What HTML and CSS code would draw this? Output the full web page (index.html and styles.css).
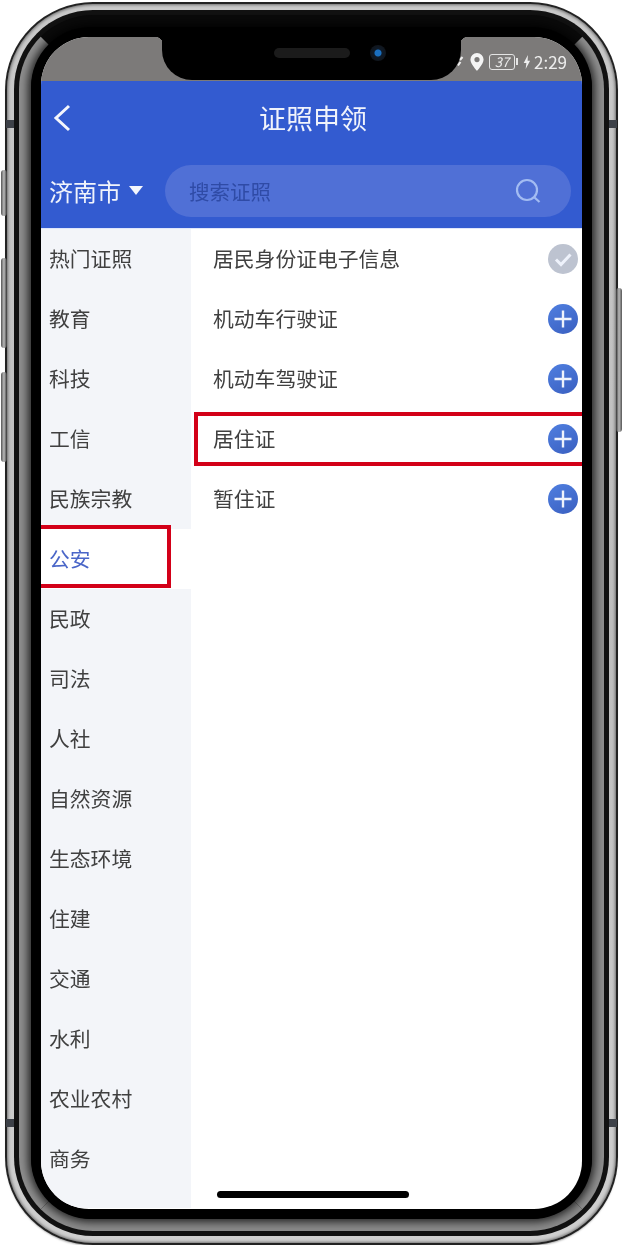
FILE: index.html
```html
<!DOCTYPE html>
<html lang="zh-CN">
<head>
  <meta charset="UTF-8" />
  <title>证照申领</title>
  <link rel="stylesheet" href="styles.css">
</head>
<body>

<div class="phone">
  <span class="side-btn btn-mute"></span>
  <span class="side-btn btn-up"></span>
  <span class="side-btn btn-down"></span>
  <span class="side-btn btn-power"></span>

  <div class="rim">
    <span class="antenna ant-tl"></span>
    <span class="antenna ant-tr"></span>
    <span class="antenna ant-bl"></span>
    <span class="antenna ant-br"></span>

    <div class="ring">
      <div class="band">
        <div class="bezel">
          <div class="screen">

            <div class="statusbar">
              <svg class="st-link" viewBox="0 0 8 12"><path d="M6.500 1 4 4M4.500 6 2 9.500"/></svg>
              <svg class="st-pin" viewBox="0 0 14 18"><path d="M7 0a6.600 6.600 0 0 0-6.600 6.600C.4 11 7 18 7 18s6.600-7 6.600-11.400A6.600 6.600 0 0 0 7 0zm0 9.200a2.600 2.600 0 1 1 0-5.200 2.600 2.600 0 0 1 0 5.200z"/></svg>
              <span class="st-battery"><i>37</i></span>
              <svg class="st-bolt" viewBox="0 0 9 16"><path d="M5.500 0 .8 9h3l-.8 7 5-9.500H5.200z"/></svg>
              <span class="st-time">2:29</span>
            </div>

            <div class="notch">
              <span class="speaker"></span>
              <span class="camera"></span>
            </div>

            <header class="app-head">
              <div class="title-bar">
                <svg class="back" viewBox="0 0 18 28"><path d="M16 2 3 14l13 12"/></svg>
                <h1>证照申领</h1>
              </div>
              <div class="search-row">
                <div class="city">济南市<span class="caret"></span></div>
                <div class="search">
                  <span>搜索证照</span>
                  <svg viewBox="0 0 26 26"><circle cx="12" cy="12" r="10"/><path d="m19.500 19.500 5 4.500"/></svg>
                </div>
              </div>
            </header>

            <div class="content">
              <ul class="side-menu">
                <li>热门证照</li>
                <li>教育</li>
                <li>科技</li>
                <li>工信</li>
                <li>民族宗教</li>
                <li class="active">公安<span class="mark"></span></li>
                <li>民政</li>
                <li>司法</li>
                <li>人社</li>
                <li>自然资源</li>
                <li>生态环境</li>
                <li>住建</li>
                <li>交通</li>
                <li>水利</li>
                <li>农业农村</li>
                <li>商务</li>
              </ul>

              <ul class="cert-list">
                <li>居民身份证电子信息
                  <svg class="ic ic-done" viewBox="0 0 30 30"><path d="m8 15.500 5 5 9.500-10"/></svg>
                </li>
                <li>机动车行驶证
                  <svg class="ic" viewBox="0 0 30 30"><path d="M15 6.500v17M6.500 15h17"/></svg>
                </li>
                <li>机动车驾驶证
                  <svg class="ic" viewBox="0 0 30 30"><path d="M15 6.500v17M6.500 15h17"/></svg>
                </li>
                <li>居住证
                  <span class="mark"></span>
                  <svg class="ic" viewBox="0 0 30 30"><path d="M15 6.500v17M6.500 15h17"/></svg>
                </li>
                <li>暂住证
                  <svg class="ic" viewBox="0 0 30 30"><path d="M15 6.500v17M6.500 15h17"/></svg>
                </li>
              </ul>
            </div>

            <div class="home-bar"></div>
          </div>
        </div>
      </div>
    </div>
  </div>
</div>

</body>
</html>
```

FILE: styles.css
```css
* {
  box-sizing: border-box;
}

body {
  margin: 0;
  background: #fff;
  font-family: "Noto Sans CJK SC", "Liberation Sans", sans-serif;
}

/* 手机外框: 一层层嵌套 */
.phone {
  position: relative;
  width: 613px;
  height: 1243px;
  margin: 2px 0 0 5px;
  padding: 2px;
  background: #222;
  border-radius: 88px;
  box-shadow: 0 2px 2px -1px rgba(0,0,0,0.35);
}

.rim {
  position: relative;
  padding: 6px 7px 7px;
  height: 100%;
  background: linear-gradient(#c9c9c9, #bdbdbd 50%, #cfcfcf);
  border-radius: 86px;
  box-shadow: inset 0 0 3px 1px rgba(0,0,0,0.45);
}

.ring {
  padding: 5px;
  height: 100%;
  background: #111;
  border-radius: 79px;
}

.band {
  height: 100%;
  border: 12px solid;
  border-color: #0a0a0a #8e8e8e #8a8a8a #8e8e8e;
  border-radius: 74px;
}

.bezel {
  height: 100%;
  padding: 10px;
  background: #000;
  border-radius: 60px;
  box-shadow: 0 0 9px 3px rgba(0,0,0,0.75);
}

.screen {
  position: relative;
  height: 1172px;
  overflow: hidden;
  background: #fff;
  border-radius: 48px;
  filter: blur(0.5px);
}

.side-btn {
  position: absolute;
  width: 6px;
  background: linear-gradient(to right, #555, #bbb 50%, #333);
  border-radius: 3px;
}

.btn-mute { left: -4px; top: 168px; height: 46px; }
.btn-up { left: -4px; top: 256px; height: 90px; }
.btn-down { left: -4px; top: 370px; height: 90px; }
.btn-power { right: -4px; top: 286px; height: 144px; background: linear-gradient(to left, #555, #bbb 50%, #333); }

.antenna {
  position: absolute;
  width: 8px;
  height: 8px;
  background: #3d4148;
}

.ant-tl { left: -1px; top: 116px; }
.ant-tr { right: -1px; top: 116px; }
.ant-bl { left: -1px; bottom: 116px; }
.ant-br { right: -1px; bottom: 116px; }

/* 状态栏 */
.statusbar {
  display: flex;
  align-items: center;
  justify-content: flex-end;
  height: 44px;
  padding: 5px 15px 0 0;
  background: #7c7a79;
  color: #eee;
}

.st-link {
  width: 8px;
  height: 12px;
  margin-right: 6px;
  fill: none;
  stroke: #eee;
  stroke-width: 2;
}

.st-pin {
  width: 14px;
  height: 18px;
  margin-right: 5px;
  fill: #f4f4f4;
}

.st-battery {
  position: relative;
  display: flex;
  align-items: center;
  justify-content: center;
  width: 26px;
  height: 16px;
  margin-right: 8px;
  border: 1.500px solid #e4e4e4;
  border-radius: 3px;
  font-size: 13px;
  line-height: 1;
}

.st-battery::after {
  content: "";
  position: absolute;
  right: -4.500px;
  top: 3px;
  width: 2px;
  height: 7px;
  background: #e4e4e4;
}

.st-bolt {
  width: 8px;
  height: 16px;
  margin-right: 3px;
  fill: #eee;
}

.st-time {
  font-size: 17px;
  line-height: 1;
}

.notch {
  position: absolute;
  left: 121px;
  top: 0;
  display: flex;
  align-items: center;
  gap: 20px;
  width: 299px;
  height: 43px;
  padding: 0 0 11px 112px;
  background: #000;
  border-radius: 0 0 30px 30px;
}

.notch::before,
.notch::after {
  content: "";
  position: absolute;
  top: 0;
  width: 8px;
  height: 8px;
}

.notch::before {
  left: -7px;
  background: radial-gradient(circle at 0 100%, transparent 8px, #000 8.500px);
}

.notch::after {
  right: -7px;
  background: radial-gradient(circle at 100% 100%, transparent 8px, #000 8.500px);
}

.speaker {
  width: 76px;
  height: 10px;
  background: #1b1b1b;
  border-radius: 5px;
}

.camera {
  width: 16px;
  height: 16px;
  background: radial-gradient(circle, #1a6fc0 0 3px, #0e1a28 4px, #10151c 8px);
  border-radius: 50%;
}

/* 顶部蓝色区域 */
.app-head {
  background: #335bd0;
  color: #fff;
}

.title-bar {
  position: relative;
  height: 74px;
  display: flex;
  align-items: center;
  justify-content: center;
  padding: 0 0 2px 3px;
}

.title-bar h1 {
  margin: 0;
  font-size: 27px;
  font-weight: 400;
  color: #f0f3fb;
}

.back {
  position: absolute;
  left: 12px;
  top: 23px;
  width: 18px;
  height: 28px;
  fill: none;
  stroke: #f4f6fc;
  stroke-width: 3;
}

.search-row {
  display: flex;
  align-items: center;
  height: 73px;
  padding: 0 11px 2px 8px;
}

.city {
  display: flex;
  align-items: center;
  width: 116px;
  font-size: 24px;
  color: #f0f3fb;
}

.caret {
  width: 0;
  height: 0;
  margin-left: 8px;
  border: 7px solid transparent;
  border-top: 9px solid #f4f6fc;
  border-bottom: 0;
}

.search {
  flex: 1;
  display: flex;
  align-items: center;
  justify-content: space-between;
  height: 52px;
  padding: 0 30px 0 24px;
  background: #5070d6;
  border-radius: 26px;
  font-size: 20.500px;
  color: #2f4ba6;
}

.search svg {
  width: 26px;
  height: 26px;
  fill: none;
  stroke: #a3bcf2;
  stroke-width: 2.200;
}

.content {
  display: flex;
  height: 980px;
  border-top: 1px solid #dfe6fb;
}

.side-menu,
.cert-list {
  margin: 0;
  padding: 0;
  list-style: none;
  font-size: 20.800px;
  color: #404040;
}

.side-menu {
  width: 150px;
  background: #f3f5f9;
}

.side-menu li {
  position: relative;
  display: flex;
  align-items: center;
  height: 60px;
  padding: 0 0 2px 8px;
}

.side-menu li.active {
  background: #fff;
  color: #4a66c8;
}

.cert-list {
  flex: 1;
}

.cert-list li {
  position: relative;
  display: flex;
  align-items: center;
  justify-content: space-between;
  height: 60px;
  padding: 0 4px 2px 22px;
}

/* 红框标注 */
.mark {
  position: absolute;
  border: 4px solid #d30018;
  border-left: 0;
}

.side-menu .mark {
  left: 0;
  top: -4px;
  width: 130px;
  height: 63px;
}

.cert-list .mark {
  left: 3px;
  right: 0;
  top: 3px;
  height: 54px;
  border-left: 4px solid #d30018;
  border-right: 0;
}

.ic {
  position: relative;
  top: 1px;
  width: 30px;
  height: 30px;
  background: linear-gradient(150deg, #4f7fe0, #3a5fc0);
  border-radius: 50%;
  fill: none;
  stroke: #eef2fb;
  stroke-width: 2.400;
}

.ic-done {
  background: #bdc3d0;
  stroke-width: 3;
}

.home-bar {
  position: absolute;
  left: 176px;
  bottom: 11px;
  width: 192px;
  height: 7px;
  background: #000;
  border-radius: 4px;
}
```
